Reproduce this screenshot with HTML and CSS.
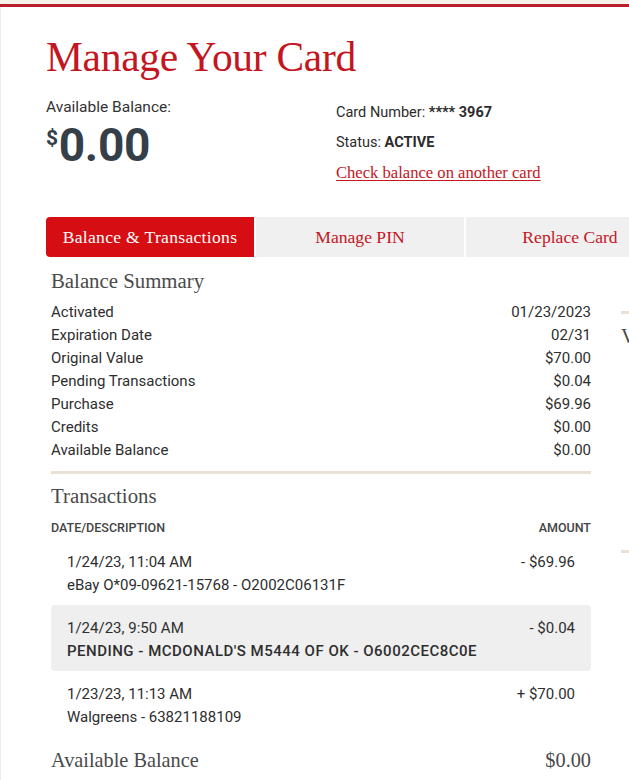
FILE: index.html
```html
<!DOCTYPE html>
<html lang="en">
<head>
<meta charset="utf-8">
<title>Manage Your Card</title>
<link rel="stylesheet" href="styles.css">
</head>
<body>
<div class="topband"></div>
<main class="page">
  <h1 class="title">Manage Your Card</h1>
  <section class="overview">
    <div class="ov-left">
      <div class="ov-label">Available Balance:</div>
      <div class="ov-amount"><span class="cur">$</span>0.00</div>
    </div>
    <div class="ov-right">
      <div class="ov-line">Card Number: <b>**** 3967</b></div>
      <div class="ov-line">Status: <b>ACTIVE</b></div>
      <a class="ov-link" href="#">Check balance on another card</a>
    </div>
  </section>

  <nav class="tabs">
    <a class="tab active" href="#">Balance &amp; Transactions</a>
    <a class="tab" href="#">Manage PIN</a>
    <a class="tab" href="#">Replace Card</a>
  </nav>

  <div class="content">
    <div class="main-col">
      <h2 class="sec-title">Balance Summary</h2>
      <dl class="summary">
        <div class="srow"><dt>Activated</dt><dd>01/23/2023</dd></div>
        <div class="srow"><dt>Expiration Date</dt><dd>02/31</dd></div>
        <div class="srow"><dt>Original Value</dt><dd>$70.00</dd></div>
        <div class="srow"><dt>Pending Transactions</dt><dd>$0.04</dd></div>
        <div class="srow"><dt>Purchase</dt><dd>$69.96</dd></div>
        <div class="srow"><dt>Credits</dt><dd>$0.00</dd></div>
        <div class="srow"><dt>Available Balance</dt><dd>$0.00</dd></div>
      </dl>
      <hr class="divider">
      <h2 class="sec-title">Transactions</h2>
      <div class="thead"><span>DATE/DESCRIPTION</span><span>AMOUNT</span></div>
      <div class="txn">
        <div class="txn-info">
          <div class="txn-date">1/24/23, 11:04 AM</div>
          <div class="txn-desc">eBay O*09-09621-15768 - O2002C06131F</div>
        </div>
        <div class="txn-amt">- $69.96</div>
      </div>
      <div class="txn pending">
        <div class="txn-info">
          <div class="txn-date">1/24/23, 9:50 AM</div>
          <div class="txn-desc strong">PENDING - MCDONALD'S M5444 OF OK - O6002CEC8C0E</div>
        </div>
        <div class="txn-amt">- $0.04</div>
      </div>
      <div class="txn">
        <div class="txn-info">
          <div class="txn-date">1/23/23, 11:13 AM</div>
          <div class="txn-desc">Walgreens - 63821188109</div>
        </div>
        <div class="txn-amt">+ $70.00</div>
      </div>
      <div class="total"><span>Available Balance</span><span>$0.00</span></div>
    </div>
    <aside class="side-col">
      <div class="side-card">View</div>
      <div class="side-card second"></div>
    </aside>
  </div>
</main>
</body>
</html>
```

FILE: styles.css
```css
html, body {
  margin: 0;
  padding: 0;
  overflow: hidden;
  background: #ffffff;
}
body {
  font-family: Roboto, "Liberation Sans", sans-serif;
  color: #2f2f2f;
}
.topband {
  height: 4px;
  background: #f7f2e9;
  border-bottom: 3px solid #b81f28;
}
.page {
  border-left: 1px solid #ececec;
  padding-left: 45px;
  width: 640px;
  min-height: 900px;
}
.title {
  margin: 0;
  padding-top: 26px;
  font-family: "Liberation Serif", "DejaVu Serif", serif;
  font-weight: 400;
  font-size: 41.5px;
  line-height: 48px;
  color: #c4161f;
  letter-spacing: -0.3px;
}
.overview {
  display: flex;
  margin-top: 17px;
}
.ov-left {
  width: 290px;
}
.ov-label {
  font-size: 15.5px;
  line-height: 18px;
  color: #333;
}
.ov-amount {
  margin-top: 7px;
  font-size: 46px;
  line-height: 44px;
  font-weight: 700;
  color: #353f49;
  letter-spacing: -0.3px;
}
.cur {
  font-size: 21px;
  vertical-align: 16px;
  line-height: 0;
  margin-right: 1px;
}
.ov-right {
  padding-top: 6px;
  display: flex;
  flex-direction: column;
}
.ov-line {
  font-size: 14.5px;
  line-height: 18px;
  margin-bottom: 12px;
  color: #2c2c2c;
}
.ov-line b {
  font-weight: 700;
}
.ov-link {
  font-family: "Liberation Serif", "DejaVu Serif", serif;
  font-size: 16.6px;
  line-height: 18px;
  color: #c4161f;
  text-decoration: underline;
  text-underline-offset: 2px;
}
.tabs {
  display: flex;
  gap: 2px;
  margin-top: 35px;
}
.tab {
  flex: 0 0 208px;
  height: 40px;
  display: flex;
  align-items: center;
  justify-content: center;
  background: #f0f0f0;
  color: #c4161f;
  font-family: "Liberation Serif", "DejaVu Serif", serif;
  font-size: 17.6px;
  text-decoration: none;
}
.tab.active {
  background: #d60d12;
  color: #ffffff;
  border-radius: 4px 0 0 4px;
  letter-spacing: 0.3px;
}
.content {
  display: flex;
  gap: 30px;
  padding-left: 5px;
}
.main-col {
  width: 540px;
  flex: 0 0 540px;
}
.sec-title {
  margin: 0;
  font-family: "Liberation Serif", "DejaVu Serif", serif;
  font-weight: 400;
  font-size: 20.8px;
  line-height: 24px;
  color: #4a4a4a;
}
.main-col > .sec-title:first-child {
  margin-top: 12px;
}
.summary {
  margin: 8px 0 0;
}
.srow {
  display: flex;
  justify-content: space-between;
  font-size: 15px;
  line-height: 23px;
  color: #2e2e2e;
}
.srow dt, .srow dd {
  margin: 0;
}
.divider {
  border: 0;
  height: 3px;
  background: #e9e1d6;
  margin: 9px 0 10px;
}
.thead {
  display: flex;
  justify-content: space-between;
  font-size: 12.5px;
  font-weight: 500;
  letter-spacing: 0;
  line-height: 16px;
  color: #444;
  margin-top: 12px;
  margin-bottom: 3px;
}
.txn {
  display: flex;
  justify-content: space-between;
  padding: 12px 16px 8px;
  border-radius: 4px;
}
.txn.pending {
  background: #efefef;
}
.txn-date, .txn-desc, .txn-amt {
  font-size: 15px;
  line-height: 23px;
  color: #2e2e2e;
}
.txn-desc.strong {
  font-weight: 500;
  letter-spacing: 0.5px;
}
.total {
  display: flex;
  justify-content: space-between;
  font-family: "Liberation Serif", "DejaVu Serif", serif;
  font-size: 20.3px;
  line-height: 24px;
  color: #4a4a4a;
  margin-top: 11px;
}
.side-col {
  flex: 0 0 60px;
}
.side-card {
  margin-top: 54px;
  border-top: 3px solid #e9e1d6;
  padding-top: 10px;
  font-family: "Liberation Serif", "DejaVu Serif", serif;
  font-size: 20px;
  line-height: 24px;
  color: #4a4a4a;
  height: 226px;
}
.side-card.second {
  margin-top: 0;
  height: 20px;
}
```
